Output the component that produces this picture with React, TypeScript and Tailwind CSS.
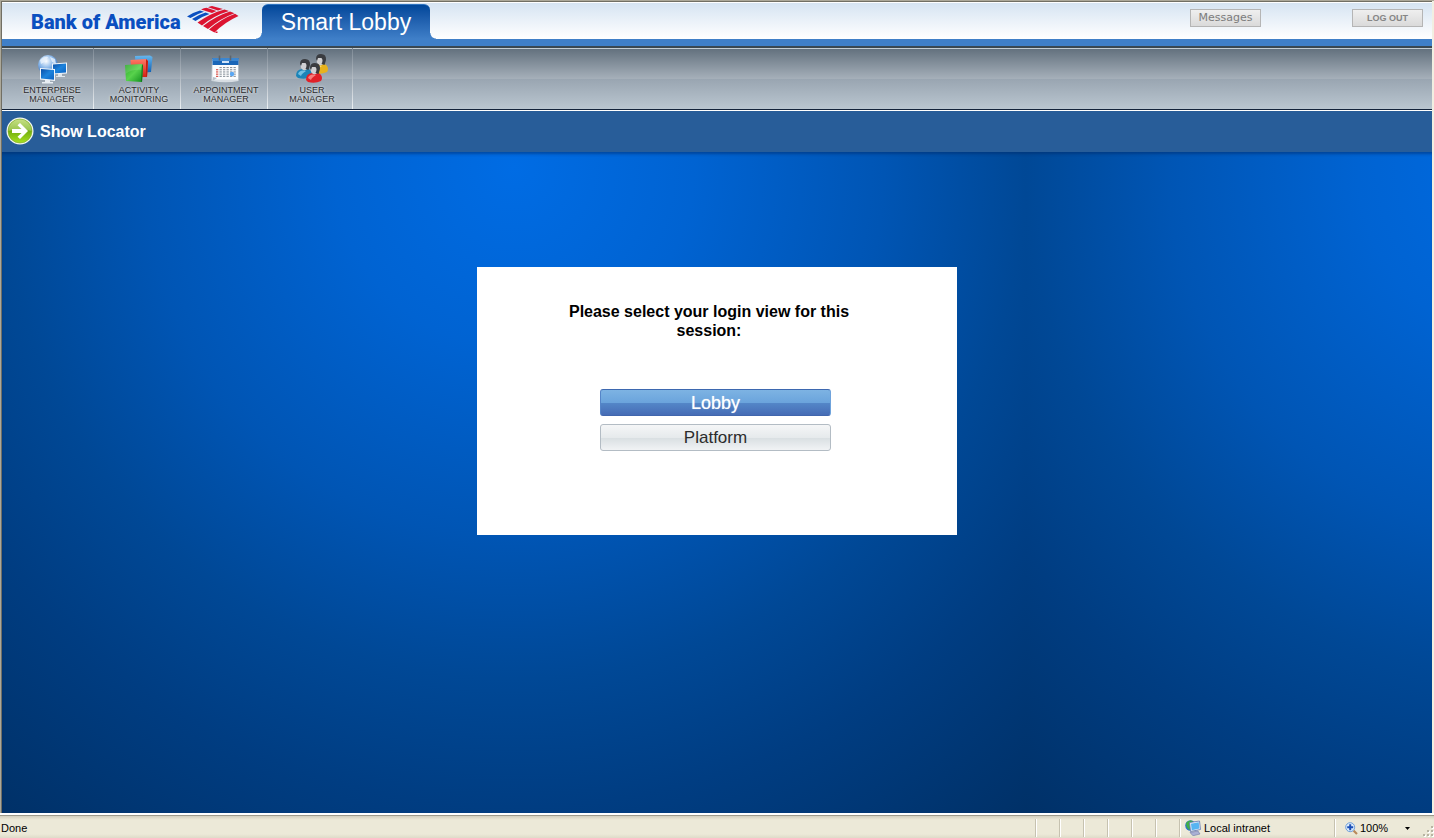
import type { ReactNode } from "react";

function FlagLogo() {
  return (
    <svg className="h-[28px] w-[52px]" viewBox="0 0 52 28" aria-hidden="true">
      <g fill="#0a4fc0">
        <path d="M0 10.500 Q7 6 13 4.500 L17 5.800 Q10 8 3.500 12Z" />
        <path d="M5 13 Q12 8.500 18.500 6.500 L22.500 8 Q15 10.500 8.500 15Z" />
      </g>
      <g fill="#dc1431">
        <path d="M14 3.500 Q17 2 19.500 1.700 L29.500 5 Q27 5.800 25 7Z" />
        <path d="M21 1.200 Q23 .2 25 0 L36 3 Q33 3.600 31 4.500Z" />
        <path d="M10.500 16.500 Q24 7 37.500 3.500 L42 5 Q27 9.500 15 19.500Z" />
        <path d="M16 20 Q29 10 43 5.600 L47.500 7.200 Q33 12.500 21 23Z" />
        <path d="M22 23.500 Q34 13 48 7.800 L51.500 10 Q38 16 27.500 26.500Z" />
        <path d="M28.500 25.500 h2 v1.500 h-2z" />
      </g>
    </svg>
  );
}

function EnterpriseIcon() {
  return (
    <svg className="h-[30px] w-[32px]" viewBox="0 0 32 30" aria-hidden="true">
      <defs>
        <radialGradient id="globe" cx=".4" cy=".3" r=".7">
          <stop offset="0" stopColor="#ffffff" />
          <stop offset=".5" stopColor="#8cb9ea" />
          <stop offset="1" stopColor="#2f66b4" />
        </radialGradient>
        <linearGradient id="screen" x1="0" y1="0" x2="1" y2="1">
          <stop offset="0" stopColor="#0a4fa8" />
          <stop offset=".5" stopColor="#1c83dc" />
          <stop offset="1" stopColor="#0b62c2" />
        </linearGradient>
      </defs>
      <circle cx="12" cy="11" r="10" fill="url(#globe)" />
      <path d="M4 6 Q8 2 12 3 L10 7 L5 10Z M14 3 L19 5 L20 10 L16 8Z" fill="#e9f3fd" opacity=".8" />
      <path d="M16 9.500 L31 8.500 V19.500 L16 20.500Z" fill="#f1f6fb" />
      <path d="M17 10.500 L30 9.600 V18.500 L17 19.500Z" fill="url(#screen)" />
      <path d="M22 20 h4 v2 h3 v1 h-9 v-1 h2z" fill="#dfe7ee" />
      <path d="M4 14 L19 15 V27 L4 25.500Z" fill="#f1f6fb" />
      <path d="M5 15.100 L18 16 V25.800 L5 24.500Z" fill="url(#screen)" />
      <path d="M9 26 h5 v2 h3 v1.500 H6 V28 h3z" fill="#e8eef4" />
    </svg>
  );
}

function ActivityIcon() {
  return (
    <svg className="h-[30px] w-[32px]" viewBox="0 0 32 30" aria-hidden="true">
      <defs>
        <linearGradient id="cubeBlue" x1="0" y1="0" x2="0" y2="1">
          <stop offset="0" stopColor="#67b7ee" />
          <stop offset="1" stopColor="#0b5eb4" />
        </linearGradient>
        <linearGradient id="cubeRed" x1="0" y1="0" x2="0" y2="1">
          <stop offset="0" stopColor="#ff7a66" />
          <stop offset="1" stopColor="#d32014" />
        </linearGradient>
        <linearGradient id="cubeGreen" x1="0" y1="0" x2="1" y2="1">
          <stop offset="0" stopColor="#2aa52a" />
          <stop offset=".5" stopColor="#58d24c" />
          <stop offset="1" stopColor="#0f8f1d" />
        </linearGradient>
      </defs>
      <path d="M12 2 L27 1.500 L29.500 3 L28 18 L13 19Z" fill="url(#cubeBlue)" />
      <path d="M7.500 6 L23 5 L25 7 L24 23 L9 23Z" fill="url(#cubeRed)" />
      <path d="M23 5 L25 7 L24 23 L23 22Z" fill="#c41e12" />
      <path d="M2 11 L19 10 L20 11.500 L19 28 L3 27Z" fill="url(#cubeGreen)" />
      <path d="M2 11 L19 10 L18.500 16 Q9 15 2.500 20Z" fill="#ffffff" opacity=".12" />
      <path d="M19 10 L20 11.500 L19 28 L18 27Z" fill="#11771c" />
    </svg>
  );
}

function AppointmentIcon() {
  const cells: ReactNode[] = [];
  for (let row = 0; row < 5; row++) {
    for (let col = 0; col < 6; col++) {
      if (row === 0 && col < 1) continue;
      cells.push(
        <rect
          key={`${row}-${col}`}
          x={6 + col * 3.5}
          y={13 + row * 2.2}
          width="2.3"
          height="1.1"
          fill={col === 0 ? "#d6453c" : "#8a939c"}
        />,
      );
    }
  }
  return (
    <svg className="h-[30px] w-[32px]" viewBox="0 0 32 30" aria-hidden="true">
      <path d="M2 5 H28.500 V27 Q16 29.500 1.500 27Z" fill="#d7dde3" />
      <path d="M3 5 H28 V25.500 H2.500Z" fill="#fcfdfe" />
      <rect x="2.500" y="4" width="26" height="7" fill="#1a66b8" />
      <rect x="2.500" y="4" width="26" height="3" fill="#3c86d0" />
      <rect x="12" y="7" width="7" height="2" fill="#cfe3f8" />
      <path d="M9.500 1.500 v5 M20.500 1.500 v5" stroke="#5d6670" strokeWidth="1.600" />
      {cells}
      <circle cx="22" cy="20" r="2.200" fill="#5aa7f3" />
      <path d="M2.500 27 L7 24 L3 23Z" fill="#b8c1ca" />
    </svg>
  );
}

function Person({ x, y, color, light }: { x: number; y: number; color: string; light: string }) {
  return (
    <g transform={`translate(${x} ${y})`}>
      <path d="M0 17 Q0 10.500 6 10 Q13 9 15 12 Q17 15 15 18 Q9 21 2 19Z" fill={color} />
      <path d="M2 15 Q3 11.500 7 11.500 L10 12.500 Q6 14 5 17Z" fill={light} opacity=".75" />
      <ellipse cx="8.500" cy="6.500" rx="3.800" ry="5" fill="#d0d0d2" />
      <path d="M4 5 Q4 0 9 0 Q14.500 0 14 6 L12.500 11 L9.500 10 Q11.500 6 9.500 4 L6 4 L5 7Z" fill="#3a3c40" />
    </g>
  );
}

function UserIcon() {
  return (
    <svg className="h-[30px] w-[34px]" viewBox="0 0 34 30" aria-hidden="true">
      <Person x={17} y={0} color="#e8b21c" light="#ffe98a" />
      <Person x={1} y={5} color="#1b84b8" light="#8fd4f2" />
      <Person x={11} y={9} color="#e02128" light="#ff9d98" />
    </svg>
  );
}

function ArrowIcon() {
  return (
    <svg className="size-7" viewBox="0 0 28 28" aria-hidden="true">
      <defs>
        <linearGradient id="arrowGreen" x1="0" y1="0" x2="0" y2="1">
          <stop offset="0" stopColor="#b4d65c" />
          <stop offset=".5" stopColor="#74ae10" />
          <stop offset="1" stopColor="#a6e020" />
        </linearGradient>
      </defs>
      <circle cx="14" cy="14" r="13.500" fill="#f4f7ee" />
      <circle cx="14" cy="14" r="12" fill="url(#arrowGreen)" stroke="#7aa823" strokeWidth=".6" />
      <path d="M2.500 14 A11.500 11.500 0 0 1 25.500 14 Q14 10 2.500 14Z" fill="#ffffff" opacity=".25" />
      <path d="M6 12 H15.500 L11.500 8.200 L14 6 L22 14 L14 22 L11.500 19.800 L15.500 16 H6Z" fill="#ffffff" />
    </svg>
  );
}

function IntranetIcon() {
  return (
    <svg className="size-4" viewBox="0 0 16 16" aria-hidden="true">
      <circle cx="5.500" cy="5.500" r="5.300" fill="#2b6fd0" />
      <path d="M1 3 Q4 -.5 8 1 L6 5 L7 8 L4 10 L1.500 7Z" fill="#3fae49" />
      <path d="M4.500 2.500 L14.500 1 L15.500 9.500 L5.500 11.500Z" fill="#e7edf6" stroke="#5f74b0" strokeWidth=".8" />
      <path d="M6 3.700 L13.700 2.300 L14.400 8.600 L6.800 10.200Z" fill="#57b4f2" />
      <path d="M5 12.500 L13 11 L15 14 L8 15.800Z" fill="#aab0d4" stroke="#6f78a8" strokeWidth=".6" />
    </svg>
  );
}

function MagnifierIcon() {
  return (
    <svg className="size-[13px]" viewBox="0 0 13 13" aria-hidden="true">
      <path d="M8.500 8.500 L12 12" stroke="#b98a5a" strokeWidth="2.200" />
      <circle cx="5.200" cy="5.200" r="4.500" fill="#dcecfb" stroke="#6f9fd8" />
      <path d="M5.200 2.200 V8.200 M2.200 5.200 H8.200" stroke="#1c50b8" strokeWidth="2" />
    </svg>
  );
}

function GripIcon() {
  const dots = [[8, 0], [4, 4], [8, 4], [0, 8], [4, 8], [8, 8]];
  return (
    <svg className="size-[11px]" viewBox="0 0 11 11" aria-hidden="true">
      {dots.map(([x, y]) => (
        <g key={`${x}-${y}`}>
          <rect x={x + 1} y={y + 1} width="2" height="2" fill="#ffffff" />
          <rect x={x} y={y} width="2" height="2" fill="#b8b4a3" />
        </g>
      ))}
    </svg>
  );
}

const sections = [
  { lines: ["ENTERPRISE", "MANAGER"], icon: <EnterpriseIcon /> },
  { lines: ["ACTIVITY", "MONITORING"], icon: <ActivityIcon /> },
  { lines: ["APPOINTMENT", "MANAGER"], icon: <AppointmentIcon /> },
  { lines: ["USER", "MANAGER"], icon: <UserIcon /> },
];

function Header() {
  return (
    <header className="flex h-[44px] items-start justify-between border-t border-b-7 border-t-white border-b-[#3f7fc8] bg-linear-to-b from-[#d6e4f2] to-white pr-[9px]">
      <div className="flex">
        <div className="flex w-[254px] justify-between pr-[17px] pl-[29px]">
          <span className="mt-[5px] font-['Roboto','Liberation_Sans',sans-serif] text-[20px] leading-[28px] font-black whitespace-nowrap text-[#0a4fc0]">
            Bank of America
          </span>
          <span className="mt-[3px]">
            <FlagLogo />
          </span>
        </div>
        <div className="mt-px flex items-end">
          <span className="size-[6px] bg-[radial-gradient(circle_at_0_0,transparent_5px,#3f7fc8_6px)]" />
          <h1 className="h-[35px] w-[168px] rounded-t-md border-t border-[#2f74c0] bg-linear-to-b from-[#00479a] to-[#3f7fc8] text-center text-[23px] leading-[35px] text-white">
            Smart Lobby
          </h1>
          <span className="size-[6px] bg-[radial-gradient(circle_at_100%_0,transparent_5px,#3f7fc8_6px)]" />
        </div>
      </div>
      <div className="mt-[6px] flex gap-[91px]">
        <button className="h-[18px] w-[71px] border border-[#b5b5b5] bg-linear-to-b from-[#efefef] to-[#dadada] font-['DejaVu_Sans',sans-serif] text-[11px] leading-[14px] text-[#7c7c7c]">
          Messages
        </button>
        <button className="h-[18px] w-[71px] border border-[#b5b5b5] bg-linear-to-b from-[#efefef] to-[#dadada] text-[9px] leading-[16px] font-bold text-[#858585]">
          LOG OUT
        </button>
      </div>
    </header>
  );
}

function Toolbar() {
  return (
    <nav className="flex h-[64px] border-t-2 border-b border-t-[#3a4750] border-b-[#14233a] bg-[linear-gradient(to_bottom,#c3cdd4_0,#c3cdd4_1px,#63717e_1px,#a6b0ba_31px,#99a5b1_31px,#bac6d0_61px)] pl-[5px]">
      {sections.map(({ lines, icon }) => (
        <button
          key={lines[0]}
          className="flex w-[87px] flex-col items-center border-r border-[#d6dde3] pt-[6px] pl-[4px] text-[9px] leading-[9px] text-[#2c2c2c] [border-image:linear-gradient(to_bottom,#7b8793,#eef2f5)_1] text-shadow-[0_0_3px_rgb(255_255_255/0.9)] last:w-[85px]"
        >
          {icon}
          <span className="mt-[2px]">{lines[0]}</span>
          <span>{lines[1]}</span>
        </button>
      ))}
    </nav>
  );
}

function StatusBar() {
  return (
    <footer className="flex h-[25px] items-stretch border-t-2 border-white bg-[linear-gradient(to_bottom,#9c9a8c_0,#9c9a8c_1px,#d2cfbf_1px,#ece9d8_5px,#ece9d8_19px,#dedbc9_23px)] text-[11px] text-black">
      <span className="flex flex-1 items-center pt-[3px] pl-px">Done</span>
      {[0, 1, 2, 3, 4, 5].map((pane) => (
        <span key={pane} className="mt-1 mb-px w-6 border-l border-[#c6c2b0] shadow-[inset_1px_0_0_#ffffff]" />
      ))}
      <span className="mt-1 mb-px flex w-[155px] items-center gap-[3px] border-l border-[#c6c2b0] pl-[5px] shadow-[inset_1px_0_0_#ffffff]">
        <IntranetIcon />
        Local intranet
      </span>
      <button className="mt-1 mb-px flex w-[86px] items-center gap-[2px] border-l border-[#c6c2b0] pl-[10px] shadow-[inset_1px_0_0_#ffffff]">
        <MagnifierIcon />
        <span className="flex-1 text-left">100%</span>
        <svg className="mr-[10px] h-[3px] w-[5px]" viewBox="0 0 5 3" aria-hidden="true">
          <path d="M0 0 H5 L2.500 3Z" fill="#000000" />
        </svg>
      </button>
      <span className="flex items-end pb-px pl-[3px]">
        <GripIcon />
      </span>
    </footer>
  );
}

export default function App() {
  return (
    <div className="flex min-h-screen flex-col bg-[#f1efe2] font-['Liberation_Sans',Arial,sans-serif]">
      <div className="flex flex-1 flex-col border-t border-l border-[#aca899]">
        <div className="mr-[2px] flex flex-1 flex-col border-t border-l border-[#716f64]">
          <Header />
          <Toolbar />
          <div className="flex h-[42px] items-start border-t border-white bg-[#285d99] pt-[4px] pl-[4px]">
            <a href="#locator" className="flex items-center gap-[6px] text-[16px] leading-[30px] font-bold text-white">
              <ArrowIcon />
              <span className="pt-[2px]">Show Locator</span>
            </a>
          </div>
          <main className="flex flex-1 justify-center bg-[radial-gradient(circle_at_512px_15px,#006ce4_0,#0063d2_180px,#0055b4_370px,#004896_512px,#003d82_640px,#003066_835px)] bg-size-[1024px_100%] pt-[115px] shadow-[inset_0_3px_3px_-1px_rgb(0_40_100/0.5)]">
            <section className="h-[268px] w-[480px] bg-white px-[83px] pt-[35px]">
              <p className="mr-[16px] text-center text-[16px] leading-[19px] font-bold text-black">
                Please select your login view for this session:
              </p>
              <div className="mt-[49px] ml-[40px] flex w-[231px] flex-col gap-2">
                <button className="h-[27px] rounded-[3px] border border-t-[#3d68b0] border-r-[#6fa3dc] border-b-[#4166ad] border-l-[#5585c8] bg-[linear-gradient(to_bottom,#7db3e3_0,#6ba4dc_50%,#5488c9_50%,#466cb5_100%)] text-[18px] leading-[27px] text-white text-shadow-[0_0_1px_rgb(255_255_255/0.7)]">
                  Lobby
                </button>
                <button className="h-[27px] rounded-[3px] border border-[#b3bcc4] bg-[linear-gradient(to_bottom,#f5f6f7_0,#e6eaec_50%,#d9dfe2_52%,#f1f3f5_100%)] text-[17px] leading-[25px] text-[#2c2c2c]">
                  Platform
                </button>
              </div>
            </section>
          </main>
        </div>
      </div>
      <StatusBar />
    </div>
  );
}
